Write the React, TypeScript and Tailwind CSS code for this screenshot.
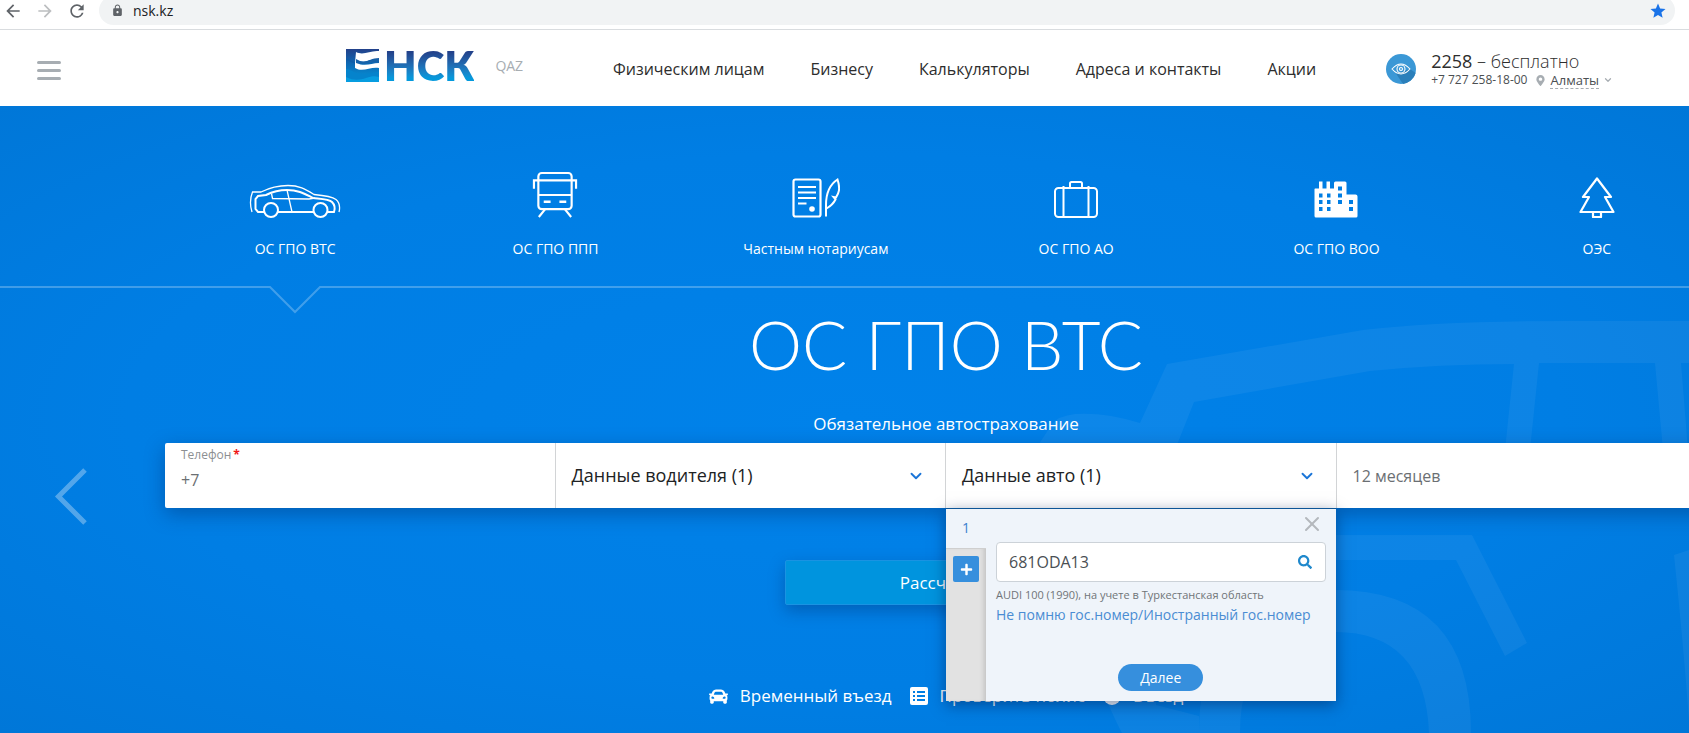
import type { ReactNode } from "react";
import { ChevronDown, X } from "lucide-react";
import { MdArrowBack, MdArrowForward, MdLock, MdRefresh, MdStar } from "react-icons/md";
import { FaCar, FaMapMarkerAlt, FaPlus, FaSearch } from "react-icons/fa";

function BrowserBar() {
  return (
    <div className="flex h-[30px] items-start overflow-hidden border-b border-[#d9dcdf] bg-white">
      <div className="flex h-[22px] items-center gap-3 pl-[3px] text-[#5f6368]">
        <button type="button" aria-label="Назад"><MdArrowBack size={20} /></button>
        <button type="button" aria-label="Вперёд" className="text-[#bcbec0]"><MdArrowForward size={20} /></button>
        <button type="button" aria-label="Обновить"><MdRefresh size={20} /></button>
      </div>
      <div className="-mt-1 ml-3 mr-[14px] flex h-[29px] grow items-center rounded-full bg-[#f1f3f4] pl-3 pr-2 text-[14px] text-[#202124]">
        <MdLock size={13} className="text-[#5f6368]" />
        <span className="ml-[9px]">nsk.kz</span>
        <button type="button" aria-label="Закладка" className="ml-auto text-[#1a73e8]"><MdStar size={18} /></button>
      </div>
    </div>
  );
}

function Logo() {
  return (
    <a href="#" aria-label="НСК" className="flex items-center gap-1">
      <svg width="34" height="33" viewBox="0 0 34 33">
        <defs>
          <linearGradient id="emblem" x1="0" y1="0" x2="0" y2="1">
            <stop offset="0" stopColor="#23418a" />
            <stop offset="0.5" stopColor="#0b6db8" />
            <stop offset="1" stopColor="#0499dc" />
          </linearGradient>
        </defs>
        <rect width="33" height="33" fill="url(#emblem)" />
        <path d="M0 10C6 12 8 15 13 15" stroke="#0e5ca8" strokeWidth="1.500" fill="none" />
        <path d="M0 20C7 21 9 25 17 25S28 23 33 23V33H0Z" fill="#0583cc" />
        <path d="M0 28C8 32 14 31 20 29S29 27 33 28V33H0Z" fill="#079de0" />
        <path d="M10 3C18 7 24 1 33 2V9C25 9 21 14 14 12L10 10Z" fill="#fff" />
        <path d="M9 3V19C17 24 25 17 33 19V14C25 14 20 18 10 14Z" fill="#fff" />
        <path d="M10 11C19 16 24 9 33 10V12C25 12 20 17 10 13Z" fill="#1762a8" />
      </svg>
      <span className="bg-gradient-to-b from-[#23418a] from-20% to-[#0499dc] to-80% bg-clip-text font-['Lato'] text-[42px] font-extrabold leading-[44px] text-transparent">НСК</span>
    </a>
  );
}

function Header() {
  return (
    <header className="flex h-[76px] items-center bg-white pr-[76px] pt-0.5">
      <button type="button" aria-label="Меню" className="ml-[37px] mt-0.5 flex w-6 flex-col gap-[5px]">
        <span className="h-[3px] rounded bg-[#a7adb2]" />
        <span className="h-[3px] rounded bg-[#a7adb2]" />
        <span className="h-[3px] rounded bg-[#a7adb2]" />
      </button>
      <div className="ml-[285px] flex w-[267px] shrink-0 items-center gap-[21px] pb-2">
        <Logo />
        <a href="#" className="text-[14px] text-[#a7adb2]">QAZ</a>
      </div>
      <nav className="flex grow items-center gap-[46px] whitespace-nowrap text-[16px] text-[#2d2d2d]">
        <a href="#">Физическим лицам</a>
        <a href="#">Бизнесу</a>
        <a href="#">Калькуляторы</a>
        <a href="#">Адреса и контакты</a>
        <a href="#">Акции</a>
      </nav>
      <div className="flex items-center gap-[15px] whitespace-nowrap">
        <button type="button" aria-label="Версия для слабовидящих">
          <svg width="30" height="30" viewBox="0 0 30 30" fill="none">
            <circle cx="15" cy="15" r="15" fill="#3b98d6" />
            <path d="M24 15L29.600 19A15 15 0 0 1 17 29.900L10 19.500Z" fill="#2b7fba" />
            <g stroke="#fff" strokeWidth="1.100">
              <path d="M6 15Q15 5 24 15Q15 25 6 15Z" />
              <circle cx="15" cy="15" r="4" />
              <circle cx="15" cy="15" r="1.500" />
            </g>
          </svg>
        </button>
        <div>
          <p className="text-[18px] leading-[22px] text-[#2d2d2d]">2258 <span className="font-light">– бесплатно</span></p>
          <div className="flex items-center text-[12px] leading-[16px] text-[#4b4f52]">
            <a href="tel:+77272581800">+7 727 258-18-00</a>
            <FaMapMarkerAlt size={11} className="ml-2 mr-1 text-[#a7adb2]" />
            <button type="button" className="flex items-center gap-1 text-[13px]">
              <span className="border-b border-dashed border-[#a7adb2]">Алматы</span>
              <ChevronDown size={10} strokeWidth={3} className="text-[#a7adb2]" />
            </button>
          </div>
        </div>
      </div>
    </header>
  );
}

const carIcon = (
  <svg width="92" height="34" viewBox="0 0 92 34" fill="none" stroke="#fff" strokeWidth="2">
    <path d="M3 28C.5 20 1.500 13 3.500 8H12C22 3 30 1.500 39 1.500C50 1.500 56 5 65 10.500C76 11.500 83 12.500 87 15.500C91 19 91 24 90 28" strokeWidth="1.300" />
    <path d="M15 28H9L6.500 25V15L9 12L17 11C24 7.500 30 6 38 6C50 6 56 10 64 14C74 15 80 15 83 18C86 21 86 25 85 28H79M64 28H29" />
    <path d="M22.500 9.500L23.500 14.500L60 15L66 14M38 6L43 28" strokeWidth="1.300" />
    <circle cx="22" cy="26" r="7" />
    <circle cx="71.500" cy="26" r="7" />
  </svg>
);

const tramIcon = (
  <svg width="46" height="47" viewBox="0 0 46 48" fill="none" stroke="#fff" strokeWidth="2.200">
    <rect x="6" y="2" width="34" height="37" rx="3.500" />
    <path d="M1.500 18V9.500H44.500V18M6 24.500H40M6.500 47L13 39M39.500 47L33 39" />
    <path d="M11.500 31.500H18.500M27.500 31.500H34.500" strokeWidth="2.500" />
  </svg>
);

const notaryIcon = (
  <svg width="48" height="40" viewBox="0 0 48 40" fill="none" stroke="#fff" strokeWidth="2.200">
    <rect x="1.500" y="1.500" width="27" height="37" rx="2" />
    <path d="M6 9H24M6 14.500H24M6 20H24M6 25.500H14.500" />
    <circle cx="20" cy="31" r="2.800" fill="#fff" stroke="none" />
    <path d="M34 38.500V27C34 17 37 7 45.500 1.500C49 12 46 16 44 19.500L41.500 19L43.500 21.500C41 26.500 38 28.500 34.500 30.500" strokeWidth="2" />
  </svg>
);

const caseIcon = (
  <svg width="44" height="37" viewBox="0 0 44 37" fill="none" stroke="#fff" strokeWidth="2">
    <rect x="1" y="7" width="42" height="29" rx="3.500" />
    <path d="M16 7V2.500Q16 1 17.500 1H26.500Q28 1 28 2.500V7M9.500 5V36M34.500 5V36" />
  </svg>
);

const cityIcon = (
  <svg width="44" height="37" viewBox="0 0 44 37">
    <path d="M1 7.500H5V.5H8.500V7.500H12.500V.5H16V7.500H20V2Q20 .5 21.500 .5H31Q32.500 .5 32.500 2V13.500H41.500Q43.500 13.500 43.500 15.500V35Q43.500 36.500 42 36.500H2Q.5 36.500 .5 35V8Z" fill="#fff" />
    <path d="M5 12.500h3.500v4H5zM13 12.500h3.500v4H13zM5 19h3.500v4H5zM13 19h3.500v4H13zM5 26h3.500v4H5zM13 26h3.500v4H13zM24 5.500h4v4h-4zM24 12.500h4v4h-4zM24 19h4v4h-4zM35 19h4v4h-4zM35 26h4v4h-4z" fill="#007ee4" />
  </svg>
);

const treeIcon = (
  <svg width="36" height="41" viewBox="0 0 36 41" fill="none" stroke="#fff" strokeWidth="2.200" strokeLinejoin="round">
    <path d="M18 1.500L4 20H10L1.500 35H34.500L26 20H32Z" />
    <path d="M14 35V40H22V35" />
  </svg>
);

const products: { label: string; icon: ReactNode }[] = [
  { label: "ОС ГПО ВТС", icon: carIcon },
  { label: "ОС ГПО ППП", icon: tramIcon },
  { label: "Частным нотариусам", icon: notaryIcon },
  { label: "ОС ГПО АО", icon: caseIcon },
  { label: "ОС ГПО ВОО", icon: cityIcon },
  { label: "ОЭС", icon: treeIcon },
];

function CarBackdrop() {
  return (
    <svg className="absolute bottom-0 right-0 h-[433px] w-[700px]" viewBox="989 300 700 433" fill="#fff" fillOpacity="0.05" aria-hidden="true">
      <path d="M1689 321H1569Q1440 321 1363 330L1167 364L1140 423Q1105 412 1075 414Q1058 416 1052 424L1035 450H1175L1194 402L1370 371Q1440 364 1514 364L1505 450H1530L1539 363H1655L1663 450H1688L1681 363H1689Z" />
      <path d="M1320 535H1472L1527 643L1505 656L1456 560H1320Z" />
      <path d="M1100 690L1107 701Q1115 720 1122 733H1199Q1199 590 1335 590Q1471 590 1471 733H1429Q1425 632 1335 632Q1240 632 1240 733H1199V716L1156 705V690Z" />
      <path d="M1674 555L1689 550V720Q1683 640 1674 555Z" />
    </svg>
  );
}

function AutoPopup() {
  return (
    <div className="absolute left-0 right-0 top-full z-10 flex h-[193px] border-t border-[#0c5597] bg-[#eff4fa] shadow-[0_4px_14px_rgba(0,30,80,0.5)]">
      <div className="flex w-10 flex-col">
        <button type="button" className="h-[39px] pb-0.5 text-[14px] text-[#3a80cf]">1</button>
        <div className="grow border-t border-[#cfcfcf] bg-[#e2e2e2] pl-[7px] pt-[7px] shadow-[inset_-5px_0_5px_-3px_rgba(0,0,0,0.15)]">
          <button type="button" aria-label="Добавить авто" className="flex size-[26px] items-center justify-center rounded-xs bg-[#368fdd] text-white">
            <FaPlus size={13} />
          </button>
        </div>
      </div>
      <div className="flex grow flex-col px-[10px] pb-[10px]">
        <button type="button" aria-label="Закрыть" className="mr-0.5 mt-[3px] self-end text-[#b4b8bd]"><X size={24} strokeWidth={2} /></button>
        <div className="mt-1.5 flex h-10 shrink-0 items-center rounded-sm border border-[#ccd2d8] bg-white pl-3 pr-[13px]">
          <input aria-label="Гос. номер" defaultValue="681ODA13" className="min-w-0 grow text-[16px] text-[#4a4f54] outline-none" />
          <button type="button" aria-label="Найти" className="text-[#1f88cc]"><FaSearch size={14} /></button>
        </div>
        <p className="mt-1 text-[11px] leading-[18px] text-[#6f7478]">AUDI 100 (1990), на учете в Туркестанская область</p>
        <a href="#" className="whitespace-nowrap text-[14px] leading-[22px] text-[#4a8cd3]">Не помню гос.номер/Иностранный гос.номер</a>
        <button type="button" className="mt-auto h-[27px] self-center rounded-full bg-[#368fdd] px-[22px] text-[14px] text-white">Далее</button>
      </div>
    </div>
  );
}

function PolicyForm() {
  return (
    <form className="mt-[7px] grid h-[65px] grid-cols-4 rounded-xs bg-white shadow-[0_6px_20px_rgba(0,40,100,0.4)]">
      <div className="flex flex-col border-r border-[#d2d4d6] px-4 pt-[3px]">
        <label htmlFor="phone" className="text-[12px] leading-[18px] text-[#8c8f92]">Телефон<span className="ml-0.5 font-bold text-[#f01818]">*</span></label>
        <input id="phone" defaultValue="+7" className="mt-1 w-full text-[16px] leading-6 text-[#6b6f73] outline-none" />
      </div>
      <button type="button" className="flex items-center justify-between border-r border-[#d2d4d6] pl-4 pr-5 text-[18px] text-[#202224]">
        Данные водителя (1)
        <ChevronDown size={18} strokeWidth={2.5} className="text-[#1b75d8]" />
      </button>
      <div className="relative border-r border-[#d2d4d6]">
        <button type="button" aria-expanded="true" className="flex size-full items-center justify-between pl-4 pr-5 text-[18px] text-[#202224]">
          Данные авто (1)
          <ChevronDown size={18} strokeWidth={2.5} className="text-[#1b75d8]" />
        </button>
        <AutoPopup />
      </div>
      <select aria-label="Срок страхования" className="appearance-none px-4 text-[16px] text-[#6b6f73] outline-none">
        <option>12 месяцев</option>
      </select>
    </form>
  );
}

function Hero() {
  return (
    <main className="relative min-h-[calc(100vh-106px)] overflow-hidden bg-[radial-gradient(ellipse_at_center,#0082ea_0%,#007ee4_60%,#0077d8_100%)] text-white">
      <CarBackdrop />
      <div className="relative">
        <div className="-mr-[38px] ml-[165px] grid grid-cols-6 pt-[52px]">
          {products.map((p) => (
            <a key={p.label} href="#" className="flex flex-col items-center">
              <span className="flex h-[60px] items-end">{p.icon}</span>
              <span className="mt-[19px] text-[14px] leading-6">{p.label}</span>
            </a>
          ))}
        </div>
        <div className="-mr-[38px] ml-[165px] mt-[25px] grid grid-cols-6">
          <div className="relative flex">
            <div className="absolute right-full top-0 w-[165px] border-t-2 border-white/25" />
            <div className="h-0 grow border-t-2 border-white/25" />
            <svg width="52" height="28" viewBox="0 0 52 28" fill="none" stroke="#fff" strokeOpacity="0.25" strokeWidth="2"><path d="M0 1H1L26 26L51 1H52" /></svg>
            <div className="h-0 grow border-t-2 border-white/25" />
          </div>
          <div className="col-span-5 h-0 border-t-2 border-white/25" />
        </div>
        <div className="-mr-[38px] ml-[165px] flex flex-col">
          <h1 className="-mt-2.5 text-center font-['Lato'] text-[67px] font-light leading-[80px]">ОС ГПО ВТС</h1>
          <p className="mt-7 text-center text-[17px] leading-6">Обязательное автострахование</p>
          <PolicyForm />
          <button type="button" className="mt-[52px] h-[45px] w-[322px] self-center rounded-xs border border-[#1a93e2] bg-[#0094de] text-[17px] shadow-[0_6px_16px_rgba(0,40,100,0.35)]">Рассчитать</button>
          <div className="mt-[79px] flex items-center justify-center gap-[18px] text-[17px] leading-6">
            <a href="#" className="flex items-center gap-3"><FaCar size={19} />Временный въезд</a>
            <a href="#" className="flex items-center gap-3">
              <svg width="18" height="18" viewBox="0 0 18 18">
                <rect width="18" height="18" rx="2" fill="#fff" />
                <path d="M3 5H5M7 5H15M3 9H5M7 9H15M3 13H5M7 13H15" stroke="#007ee4" strokeWidth="1.800" />
              </svg>
              Проверить полис
            </a>
            <a href="#" className="flex items-center gap-3">
              <svg width="18" height="18" viewBox="0 0 18 18"><circle cx="9" cy="9" r="9" fill="#fff" /></svg>
              Въезд
            </a>
          </div>
        </div>
      </div>
      <button type="button" aria-label="Предыдущий" className="absolute left-[54px] top-[362px]">
        <svg width="34" height="57" viewBox="0 0 34 57" fill="none" stroke="#fff" strokeOpacity="0.32" strokeWidth="5"><path d="M31 2L4.500 28.500L31 55" /></svg>
      </button>
    </main>
  );
}

export default function App() {
  return (
    <div className="min-h-screen font-['Open_Sans',sans-serif]">
      <BrowserBar />
      <Header />
      <Hero />
    </div>
  );
}
